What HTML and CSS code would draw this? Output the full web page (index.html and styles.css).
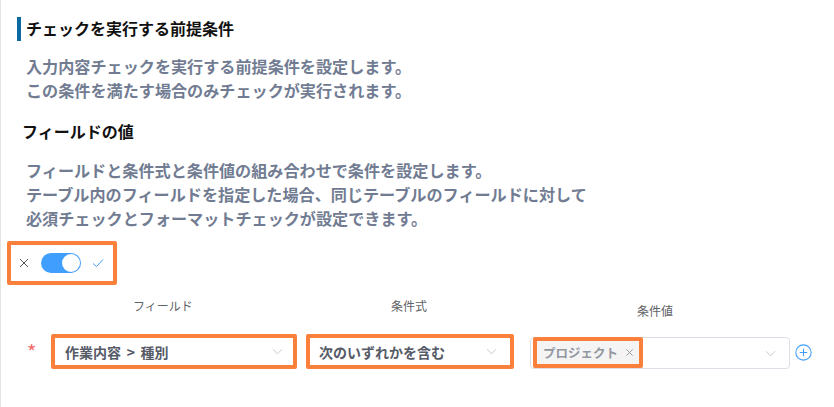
FILE: index.html
```html
<!DOCTYPE html>
<html lang="ja">
<head>
<meta charset="utf-8">
<title>チェックを実行する前提条件</title>
<link rel="stylesheet" href="styles.css">
</head>
<body>
<main class="page">
  <h2 class="section-title">チェックを実行する前提条件</h2>
  <p class="desc first">入力内容チェックを実行する前提条件を設定します。<br>この条件を満たす場合のみチェックが実行されます。</p>
  <h3 class="sub-title">フィールドの値</h3>
  <p class="desc second">フィールドと条件式と条件値の組み合わせで条件を設定します。<br>テーブル内のフィールドを指定した場合、同じテーブルのフィールドに対して<br>必須チェックとフォーマットチェックが設定できます。</p>
  <div class="toggle-box">
    <svg class="ico-x" viewBox="0 0 10 10"><path d="M1 1L9 9M9 1L1 9"/></svg>
    <span class="switch"><span class="knob"></span></span>
    <svg class="ico-check" viewBox="0 0 12 10"><path d="M1 5.5L4.5 8.5L11 1.5"/></svg>
  </div>
  <div class="labels">
    <span class="label l1">フィールド</span>
    <span class="label l2">条件式</span>
    <span class="label l3">条件値</span>
  </div>
  <div class="row">
    <span class="req">*</span>
    <div class="select s1"><span class="path">作業内容 &gt; 種別</span><svg class="chev" viewBox="0 0 12 7"><path d="M1 1L6 6L11 1"/></svg></div>
    <div class="select s2"><span>次のいずれかを含む</span><svg class="chev" viewBox="0 0 12 7"><path d="M1 1L6 6L11 1"/></svg></div>
    <div class="multi">
      <div class="tag"><span>プロジェクト</span><svg class="tag-x" viewBox="0 0 10 10"><path d="M1.5 1.5L8.5 8.5M8.5 1.5L1.5 8.5"/></svg></div>
      <svg class="chev" viewBox="0 0 12 7"><path d="M1 1L6 6L11 1"/></svg>
    </div>
    <svg class="plus" viewBox="0 0 16 16"><circle cx="8" cy="8" r="7.2"/><path d="M8 4.5V11.5M4.5 8H11.5"/></svg>
  </div>
</main>
</body>
</html>
```
FILE: styles.css
```css
* { box-sizing: border-box; }
html, body { margin: 0; padding: 0; background: #fff; }
body {
  width: 834px;
  height: 407px;
  overflow: hidden;
  font-family: "Noto Sans CJK JP", "Liberation Sans", sans-serif;
}
.page {
  height: 407px;
  padding: 17px 0 0 6px;
  border-left: 1px solid #e4e4e4;
}
.section-title {
  margin: 0 0 0 10px;
  height: 24px;
  padding-left: 5px;
  border-left: 4px solid #0b6aa2;
  font-size: 16px;
  line-height: 23px;
  font-weight: 700;
  color: #111;
}
.desc {
  margin: 0 0 0 19px;
  font-size: 16.12px;
  line-height: 24px;
  font-weight: 700;
  color: #717c92;
}
.desc.first { margin-top: 13px; }
.sub-title {
  margin: 17px 0 0 15px;
  font-size: 16px;
  line-height: 24px;
  font-weight: 700;
  color: #111;
}
.desc.second { margin-top: 15px; }
.toggle-box {
  display: flex;
  align-items: center;
  width: 110px;
  height: 44px;
  margin-top: 11px;
  padding-left: 8px;
  border: 4px solid #fb803c;
  border-radius: 2px;
}
.ico-x { width: 10px; height: 10px; fill: none; stroke: #555; stroke-width: 1; }
.switch {
  display: flex;
  justify-content: flex-end;
  align-items: center;
  width: 40px;
  height: 20px;
  margin-left: 12px;
  padding-right: 1px;
  background: #409eff;
  border-radius: 10px;
}
.knob { width: 18px; height: 18px; background: #fff; border-radius: 50%; }
.ico-check { width: 12px; height: 10px; margin-left: 11px; fill: none; stroke: #409eff; stroke-width: 1; }
.labels {
  display: flex;
  font-size: 12px;
  line-height: 16px;
  color: #606266;
  height: 36px;
  margin-top: 13px;
}
.label { display: block; text-align: center; }
.l1 { width: 100px; margin-left: 106px; }
.l2 { width: 80px; margin-left: 156px; }
.l3 { width: 80px; margin-left: 166px; margin-top: 5px; }
.row { display: flex; align-items: flex-start; height: 40px; }
.req {
  width: 44px;
  padding-left: 20px;
  color: #f56c6c;
  font-size: 20px;
  line-height: 36px;
}
.select {
  display: flex;
  align-items: center;
  justify-content: space-between;
  height: 35px;
  padding: 0 10px 0 10px;
  border: 4px solid #fb803c;
  border-radius: 2px;
  font-size: 14px;
  font-weight: 700;
  color: #565b68;
}
.path { word-spacing: 2.5px; }
.s1 { width: 246px; margin-right: 9px; }
.s2 { width: 208px; margin-right: 16px; padding: 0 13px 0 9px; }
.chev { width: 11px; height: 7px; fill: none; stroke: #c0c4cc; stroke-width: 1; }
.multi {
  display: flex;
  align-items: center;
  justify-content: space-between;
  width: 260px;
  height: 32px;
  margin-top: 3px;
  padding: 0 13px 0 2px;
  border: 1px solid #dcdfe6;
  border-radius: 4px;
}
.tag {
  display: flex;
  align-items: center;
  width: 110px;
  height: 31px;
  margin-top: -2px;
  padding-left: 6px;
  background: #f4f4f5;
  border: 4px solid #fb803c;
  border-radius: 2px;
  font-size: 12.5px;
  font-weight: 700;
  color: #9397a0;
}
.tag-x { width: 9px; height: 9px; margin-left: 7px; fill: none; stroke: #909399; stroke-width: 1; }
.plus { width: 17px; height: 17px; margin: 10px 0 0 5px; fill: none; stroke: #409eff; stroke-width: 1; }
```
